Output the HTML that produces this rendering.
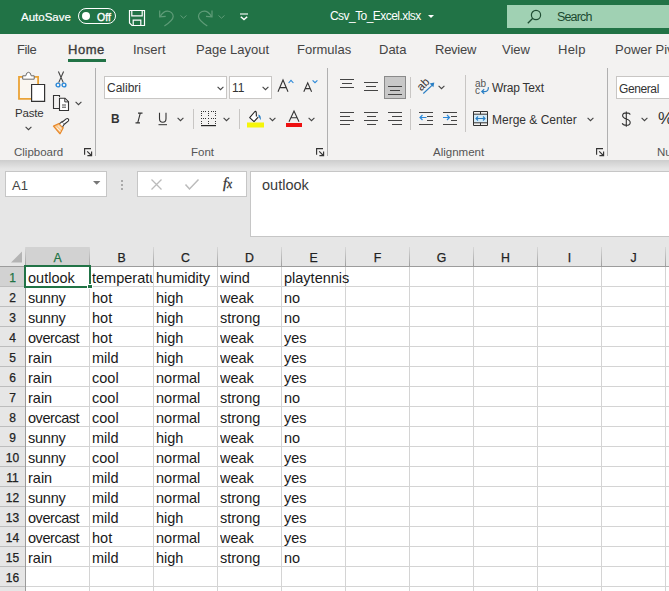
<!DOCTYPE html><html><head><meta charset="utf-8"><style>
*{box-sizing:border-box;margin:0;padding:0}
html,body{width:669px;height:591px;overflow:hidden;background:#fff;font-family:"Liberation Sans",sans-serif}
div,span{position:absolute;white-space:nowrap}
svg{position:absolute;overflow:visible}
.tab{font-size:13px;color:#444;line-height:16px;top:42px}
.gl{font-size:11.5px;color:#555;line-height:14px;top:145px}
.rt{font-size:12px;color:#333;line-height:14px}
.cell{font-size:14.5px;color:#1a1a1a;line-height:20px;height:20px;overflow:hidden}
.ch{font-size:12.3px;color:#222;-webkit-text-stroke-width:0.25px;text-align:center;line-height:19px;height:19px;top:248.5px}
.rh{font-size:12px;color:#222;-webkit-text-stroke-width:0.25px;text-align:center;line-height:20px;left:0;width:25px}
</style></head><body><div style="left:0;top:0;width:669px;height:34px;background:#217346"></div><div style="left:21px;top:10px;font-size:11.5px;line-height:14px;color:#fff;-webkit-text-stroke:0.2px #fff">AutoSave</div><div style="left:78px;top:8px;width:38px;height:16px;border:1.2px solid #fff;border-radius:8px"></div><div style="left:82px;top:12px;width:8px;height:8px;background:#fff;border-radius:50%"></div><div style="left:97px;top:10.5px;font-size:10.5px;line-height:12px;color:#fff;-webkit-text-stroke:0.35px #fff">Off</div><svg style="left:128px;top:9px" width="18" height="18" viewBox="0 0 18 18"><path d="M1.5 1.5H16.5V16.5H4L1.5 14Z" fill="none" stroke="#fff" stroke-width="1.2"/><path d="M3.8 1.5V6.8H14.2V1.5M5.2 16.5V11.2H12.8V16.5" fill="none" stroke="#fff" stroke-width="1.2"/></svg><svg style="left:157px;top:9px" width="18" height="18" viewBox="0 0 18 18"><path d="M2.7 1.6L2.7 7.9L8.7 7.4" fill="none" stroke="#5f9c78" stroke-width="1.2"/><path d="M3.2 7.3C5.5 3.8 7.8 2.1 10.3 2.1C13.6 2.1 16.2 4.4 16.2 7.5C16.2 10.6 12.3 13.8 7.4 16.9" fill="none" stroke="#5f9c78" stroke-width="1.2"/></svg><svg style="left:180px;top:15px" width="7" height="4" viewBox="0 0 7 4"><path d="M0.5 0.5l3 2.7 3-2.7" fill="none" stroke="#5f9c78" stroke-width="1"/></svg><svg style="left:197px;top:9px" width="18" height="18" viewBox="0 0 18 18"><g transform="translate(17.7 0) scale(-1 1)"><path d="M2.7 1.6L2.7 7.9L8.7 7.4" fill="none" stroke="#5f9c78" stroke-width="1.2"/><path d="M3.2 7.3C5.5 3.8 7.8 2.1 10.3 2.1C13.6 2.1 16.2 4.4 16.2 7.5C16.2 10.6 12.3 13.8 7.4 16.9" fill="none" stroke="#5f9c78" stroke-width="1.2"/></g></svg><svg style="left:218px;top:15px" width="7" height="4" viewBox="0 0 7 4"><path d="M0.5 0.5l3 2.7 3-2.7" fill="none" stroke="#5f9c78" stroke-width="1"/></svg><svg style="left:239px;top:13px" width="10" height="8" viewBox="0 0 10 8"><path d="M1 1h8" stroke="#fff" stroke-width="1.1"/><path d="M1.8 3.8l3.2 2.8 3.2-2.8" fill="none" stroke="#fff" stroke-width="1.5"/></svg><div style="left:330px;top:9px;font-size:12px;letter-spacing:-0.55px;line-height:14px;color:#fff">Csv_To_Excel.xlsx</div><svg style="left:428px;top:15px" width="6" height="4" viewBox="0 0 6 4"><path d="M0 0h6l-3 3z" fill="#fff"/></svg><div style="left:507px;top:5px;width:170px;height:23px;background:#a0d1b3"></div><svg style="left:526px;top:9px" width="16" height="16" viewBox="0 0 16 16"><circle cx="10" cy="6" r="4.6" fill="none" stroke="#1f4d33" stroke-width="1.2"/><path d="M6.8 9.3L1.8 14.3" stroke="#1f4d33" stroke-width="1.3"/></svg><div style="left:557px;top:10px;font-size:12.5px;letter-spacing:-0.85px;line-height:15px;color:#1b4a30">Search</div><div style="left:0;top:34px;width:669px;height:126px;background:#f3f2f1"></div><div class="tab" style="left:17px;letter-spacing:-0.4px;">File</div><div class="tab" style="left:68px;color:#3a3a3a;-webkit-text-stroke:0.35px #3a3a3a;letter-spacing:0.55px;">Home</div><div class="tab" style="left:133px;">Insert</div><div class="tab" style="left:196px;">Page Layout</div><div class="tab" style="left:297px;">Formulas</div><div class="tab" style="left:379px;">Data</div><div class="tab" style="left:435px;letter-spacing:-0.25px;">Review</div><div class="tab" style="left:502px;">View</div><div class="tab" style="left:558px;letter-spacing:0.25px;">Help</div><div class="tab" style="left:615px;">Power Pivot</div><div style="left:68px;top:59px;width:38px;height:3px;background:#217346"></div><div style="left:95px;top:68px;width:1px;height:88px;background:#b0b0b0"></div><div style="left:327px;top:68px;width:1px;height:88px;background:#b0b0b0"></div><div style="left:607px;top:68px;width:1px;height:88px;background:#b0b0b0"></div><div class="gl" style="left:14px">Clipboard</div><div class="gl" style="left:191px">Font</div><div class="gl" style="left:433px">Alignment</div><div class="gl" style="left:657px">Number</div><svg style="left:84px;top:148px" width="8" height="8" viewBox="0 0 8 8"><path d="M0.6 6.7V0.6H7M3.2 3.3L7.4 7.5M3.4 7.6H7.6V3.4" fill="none" stroke="#333" stroke-width="1.15"/></svg><svg style="left:316px;top:148px" width="8" height="8" viewBox="0 0 8 8"><path d="M0.6 6.7V0.6H7M3.2 3.3L7.4 7.5M3.4 7.6H7.6V3.4" fill="none" stroke="#333" stroke-width="1.15"/></svg><svg style="left:596px;top:148px" width="8" height="8" viewBox="0 0 8 8"><path d="M0.6 6.7V0.6H7M3.2 3.3L7.4 7.5M3.4 7.6H7.6V3.4" fill="none" stroke="#333" stroke-width="1.15"/></svg><svg style="left:17px;top:71px" width="30" height="32" viewBox="0 0 30 32"><path d="M2 5.8H21.1V27.9H2Z" fill="#faf6f0" stroke="#eba336" stroke-width="1.8"/><path d="M5.7 8.2V4.8H8.8Q9.2 1.3 11.5 1.3Q13.8 1.3 14.2 4.8H17.2V8.2Z" fill="#fff" stroke="#6a6a6a" stroke-width="1"/><path d="M14.6 13.5H27.6V30.3H14.6Z" fill="#fff" stroke="#333" stroke-width="1.2"/></svg><div class="rt" style="left:15px;top:106px;font-size:11.5px;letter-spacing:-0.2px">Paste</div><svg style="left:25px;top:126px" width="7" height="5" viewBox="0 0 7 5"><path d="M0.6 0.8l2.9 2.9 2.9-2.9" fill="none" stroke="#444" stroke-width="1.1"/></svg><svg style="left:55px;top:70px" width="12" height="18" viewBox="0 0 12 18"><path d="M3.4 1.5L8.3 12.6M8.6 1.5L3.7 12.6" stroke="#444" stroke-width="1.1"/><circle cx="3" cy="15" r="1.9" fill="none" stroke="#2b88d8" stroke-width="1.4"/><circle cx="9" cy="15" r="1.9" fill="none" stroke="#2b88d8" stroke-width="1.4"/></svg><svg style="left:52px;top:94px" width="18" height="18" viewBox="0 0 18 18"><path d="M7.5 3V1.5H1.5V14.5H7" fill="none" stroke="#333" stroke-width="1.1"/><path d="M7.5 4.2H13L16.5 7.7V16.5H7.5Z" fill="#fff" stroke="#333" stroke-width="1.1"/><path d="M12.8 4.2V7.9H16.5" fill="none" stroke="#333" stroke-width="1"/><path d="M10 11H14M10 13.2H14" stroke="#333" stroke-width="0.9"/></svg><svg style="left:75px;top:101px" width="7" height="5" viewBox="0 0 7 5"><path d="M0.6 0.8l2.9 2.9 2.9-2.9" fill="none" stroke="#444" stroke-width="1.1"/></svg><svg style="left:52px;top:118px" width="18" height="17" viewBox="0 0 18 17"><path d="M1.5 8.2L7 5.5L11.2 9.8L8 15.8Z" fill="#f9c98f" stroke="#e8892b" stroke-width="1.3" stroke-linejoin="round"/><path d="M4.5 9.5L8.5 13.3M6.2 7.8L9.5 11" stroke="#fff" stroke-width="0.8"/><path d="M7.6 5.6L10.2 3.6L12.5 5.9L10.6 8.7" fill="#fff" stroke="#333" stroke-width="1.1"/><path d="M10.4 4L14.2 0.9C15 0.3 15.9 0.5 16.4 1.1C16.9 1.7 16.8 2.5 16.2 3.1L12.3 6.2" fill="#fff" stroke="#333" stroke-width="1.1"/></svg><div style="left:104px;top:76px;width:123px;height:23px;background:#fff;border:1px solid #c8c6c4"></div><div class="rt" style="left:107px;top:81px">Calibri</div><svg style="left:217px;top:86px" width="7" height="5" viewBox="0 0 7 5"><path d="M0.6 0.8l2.9 2.9 2.9-2.9" fill="none" stroke="#444" stroke-width="1.1"/></svg><div style="left:229px;top:76px;width:43px;height:23px;background:#fff;border:1px solid #c8c6c4"></div><div class="rt" style="left:232px;top:81px">11</div><svg style="left:262px;top:86px" width="7" height="5" viewBox="0 0 7 5"><path d="M0.6 0.8l2.9 2.9 2.9-2.9" fill="none" stroke="#444" stroke-width="1.1"/></svg><svg style="left:277px;top:79px" width="18" height="14" viewBox="0 0 18 14"><path d="M1 12.8L6 1L11 12.8M2.8 8.6H9.2" fill="none" stroke="#333" stroke-width="1.1"/><path d="M11.6 4L14 1.4L16.4 4" fill="none" stroke="#2b88d8" stroke-width="1.1"/></svg><svg style="left:303px;top:79px" width="16" height="14" viewBox="0 0 16 14"><path d="M0.8 12.8L4.7 3.8L8.6 12.8M2.2 9.6H7.2" fill="none" stroke="#333" stroke-width="1.1"/><path d="M9.6 1.3L12 3.7L14.4 1.3" fill="none" stroke="#2b88d8" stroke-width="1.1"/></svg><div style="left:111px;top:111.5px;font-size:13px;font-weight:bold;line-height:14px;color:#333;transform:scaleX(0.92);transform-origin:left">B</div><svg style="left:135px;top:112px" width="8" height="12" viewBox="0 0 8 12"><path d="M3 1.1H7.5M0.5 10.9H5M5.3 1.1L2.7 10.9" fill="none" stroke="#333" stroke-width="1.1"/></svg><svg style="left:158px;top:112px" width="10" height="14" viewBox="0 0 10 14"><path d="M1.5 0.8V6.5C1.5 9 2.8 10.3 4.8 10.3C6.8 10.3 8 9 8 6.5V0.8" fill="none" stroke="#333" stroke-width="1.1"/><path d="M0.5 12.7H9" stroke="#333" stroke-width="1"/></svg><svg style="left:177px;top:117px" width="7" height="5" viewBox="0 0 7 5"><path d="M0.6 0.8l2.9 2.9 2.9-2.9" fill="none" stroke="#444" stroke-width="1.1"/></svg><div style="left:193px;top:109px;width:1px;height:20px;background:#c8c6c4"></div><svg style="left:201px;top:111px" width="16" height="16" viewBox="0 0 16 16"><g fill="#333"><rect x="0" y="0" width="1" height="1"/><rect x="0" y="2" width="1" height="1"/><rect x="0" y="4" width="1" height="1"/><rect x="0" y="7" width="1" height="1"/><rect x="0" y="10" width="1" height="1"/><rect x="0" y="12" width="1" height="1"/><rect x="2" y="0" width="1" height="1"/><rect x="2" y="7" width="1" height="1"/><rect x="4" y="0" width="1" height="1"/><rect x="4" y="7" width="1" height="1"/><rect x="7" y="0" width="1" height="1"/><rect x="7" y="2" width="1" height="1"/><rect x="7" y="4" width="1" height="1"/><rect x="7" y="7" width="1" height="1"/><rect x="7" y="10" width="1" height="1"/><rect x="7" y="12" width="1" height="1"/><rect x="10" y="0" width="1" height="1"/><rect x="10" y="7" width="1" height="1"/><rect x="12" y="0" width="1" height="1"/><rect x="12" y="7" width="1" height="1"/><rect x="14" y="0" width="1" height="1"/><rect x="14" y="2" width="1" height="1"/><rect x="14" y="4" width="1" height="1"/><rect x="14" y="7" width="1" height="1"/><rect x="14" y="10" width="1" height="1"/><rect x="14" y="12" width="1" height="1"/></g><rect x="0" y="14" width="15" height="1.2" fill="#222"/></svg><svg style="left:223px;top:117px" width="7" height="5" viewBox="0 0 7 5"><path d="M0.6 0.8l2.9 2.9 2.9-2.9" fill="none" stroke="#444" stroke-width="1.1"/></svg><div style="left:239px;top:109px;width:1px;height:20px;background:#c8c6c4"></div><svg style="left:247px;top:110px" width="17" height="18" viewBox="0 0 17 18"><path d="M9.4 6.6L9.2 2.2Q8.6 0.7 7.5 2L2.7 7.6L7 11.6L11.2 7.2" fill="#fff" stroke="#222" stroke-width="1.1" stroke-linejoin="round"/><path d="M11.6 4.6Q14.2 5.4 13.8 10.3Q12.6 8.2 11.4 6.2Z" fill="#2a7fc4"/><path d="M0 12.5h17v5H0z" fill="#f5f50a"/></svg><svg style="left:269px;top:117px" width="7" height="5" viewBox="0 0 7 5"><path d="M0.6 0.8l2.9 2.9 2.9-2.9" fill="none" stroke="#444" stroke-width="1.1"/></svg><svg style="left:288px;top:110px" width="12" height="13" viewBox="0 0 12 13"><path d="M1 11.8L6 1L11 11.8M2.9 7.8H9.1" fill="none" stroke="#333" stroke-width="1.1"/></svg><div style="left:286px;top:123px;width:16px;height:4px;background:#ee1111"></div><svg style="left:308px;top:117px" width="7" height="5" viewBox="0 0 7 5"><path d="M0.6 0.8l2.9 2.9 2.9-2.9" fill="none" stroke="#444" stroke-width="1.1"/></svg><div style="left:340px;top:78.7px;width:14px;height:1.5px;background:#444"></div><div style="left:342px;top:82.8px;width:10px;height:1.5px;background:#444"></div><div style="left:340px;top:86.8px;width:14px;height:1.5px;background:#444"></div><div style="left:364px;top:81.7px;width:14px;height:1.5px;background:#444"></div><div style="left:366px;top:85.8px;width:10px;height:1.5px;background:#444"></div><div style="left:364px;top:89.8px;width:14px;height:1.5px;background:#444"></div><div style="left:384px;top:76px;width:22px;height:23px;background:#c8c8c8;border:1px solid #8a8a8a"></div><div style="left:388px;top:85.7px;width:14px;height:1.5px;background:#444"></div><div style="left:390px;top:89.8px;width:10px;height:1.5px;background:#444"></div><div style="left:388px;top:93.8px;width:14px;height:1.5px;background:#444"></div><div style="left:410px;top:77px;width:1px;height:21px;background:#c8c6c4"></div><div style="left:417px;top:78.5px;font-size:11.5px;line-height:11px;color:#333;transform:rotate(-45deg)">ab</div><svg style="left:422px;top:82px" width="14" height="13" viewBox="0 0 14 13"><path d="M1.3 11.5L10 3.4" fill="none" stroke="#2a7fc4" stroke-width="1.2"/><path d="M7.6 1.6L12.3 0.6L11.4 5.3Z" fill="#2a7fc4"/></svg><svg style="left:438px;top:85px" width="7" height="5" viewBox="0 0 7 5"><path d="M0.6 0.8l2.9 2.9 2.9-2.9" fill="none" stroke="#444" stroke-width="1.1"/></svg><div style="left:340px;top:111.8px;width:14px;height:1.5px;background:#444"></div><div style="left:340px;top:115.8px;width:10px;height:1.5px;background:#444"></div><div style="left:340px;top:119.8px;width:14px;height:1.5px;background:#444"></div><div style="left:340px;top:123.8px;width:10px;height:1.5px;background:#444"></div><div style="left:364px;top:111.8px;width:14px;height:1.5px;background:#444"></div><div style="left:366.5px;top:115.8px;width:9.5px;height:1.5px;background:#444"></div><div style="left:364px;top:119.8px;width:14px;height:1.5px;background:#444"></div><div style="left:366.5px;top:123.8px;width:9.5px;height:1.5px;background:#444"></div><div style="left:388px;top:111.8px;width:14px;height:1.5px;background:#444"></div><div style="left:392px;top:115.8px;width:10px;height:1.5px;background:#444"></div><div style="left:388px;top:119.8px;width:14px;height:1.5px;background:#444"></div><div style="left:392px;top:123.8px;width:10px;height:1.5px;background:#444"></div><div style="left:410px;top:109px;width:1px;height:21px;background:#c8c6c4"></div><div style="left:419px;top:111.8px;width:14px;height:1.5px;background:#444"></div><div style="left:419px;top:123.8px;width:14px;height:1.5px;background:#444"></div><div style="left:427px;top:115.8px;width:6px;height:1.5px;background:#444"></div><div style="left:427px;top:119.8px;width:6px;height:1.5px;background:#444"></div><svg style="left:419px;top:114px" width="8" height="7" viewBox="0 0 8 7"><path d="M7.5 3.5H1M3.5 1L1 3.5 3.5 6" fill="none" stroke="#2b88d8" stroke-width="1.2"/></svg><div style="left:443px;top:111.8px;width:14px;height:1.5px;background:#444"></div><div style="left:443px;top:123.8px;width:14px;height:1.5px;background:#444"></div><div style="left:451px;top:115.8px;width:6px;height:1.5px;background:#444"></div><div style="left:451px;top:119.8px;width:6px;height:1.5px;background:#444"></div><svg style="left:443px;top:114px" width="8" height="7" viewBox="0 0 8 7"><path d="M0 3.5H6.5M4 1l2.5 2.5L4 6" fill="none" stroke="#2b88d8" stroke-width="1.2"/></svg><div style="left:465px;top:75px;width:1px;height:57px;background:#c8c6c4"></div><div style="left:475px;top:78.5px;font-size:10px;line-height:10px;color:#555">ab</div><div style="left:475px;top:86px;font-size:10px;line-height:10px;color:#555">c</div><svg style="left:480px;top:86px" width="10" height="9" viewBox="0 0 10 9"><path d="M8.3 1.2C8.6 3.5 7.5 5.6 5 5.6H2M4.2 3.3L1.8 5.6L4.2 7.9" fill="none" stroke="#2a7fc4" stroke-width="1.2"/></svg><div class="rt" style="left:492px;top:81px;letter-spacing:-0.2px">Wrap Text</div><svg style="left:473px;top:111px" width="15" height="15" viewBox="0 0 15 15"><rect x="1" y="3.5" width="13" height="8" fill="#d4ebf8"/><path d="M0.5 0.5H14.5V14.5H0.5Z" fill="none" stroke="#333" stroke-width="1"/><path d="M0.5 3.2H14.5M0.5 11.8H14.5M7.5 0.5V3.2M7.5 11.8V14.5" stroke="#333" stroke-width="1"/><path d="M3 7.5H12M5 5.5L3 7.5L5 9.5M10 5.5L12 7.5L10 9.5" fill="none" stroke="#2a7fc4" stroke-width="1.1"/></svg><div class="rt" style="left:492px;top:113px">Merge &amp; Center</div><svg style="left:587px;top:117px" width="7" height="5" viewBox="0 0 7 5"><path d="M0.6 0.8l2.9 2.9 2.9-2.9" fill="none" stroke="#444" stroke-width="1.1"/></svg><div style="left:616px;top:76px;width:80px;height:23px;background:#fff;border:1px solid #c8c6c4"></div><div class="rt" style="left:619px;top:82px;letter-spacing:-0.4px">General</div><svg style="left:621px;top:110px" width="11" height="18" viewBox="0 0 11 18"><path d="M5.3 1.5V16.7M9.2 4.6C8.8 3.4 7.4 2.9 5.3 2.9C3 2.9 1.6 4 1.6 5.8C1.6 7.7 3.2 8.3 5.3 9C7.6 9.7 9.2 10.4 9.2 12.4C9.2 14.3 7.6 15.3 5.3 15.3C3.2 15.3 1.7 14.6 1.2 13.2" fill="none" stroke="#333" stroke-width="1.1"/></svg><svg style="left:641px;top:117px" width="7" height="5" viewBox="0 0 7 5"><path d="M0.6 0.8l2.9 2.9 2.9-2.9" fill="none" stroke="#444" stroke-width="1.1"/></svg><div style="left:658px;top:110px;font-size:17px;line-height:18px;color:#333">%</div><div style="left:0;top:160px;width:669px;height:87px;background:#e6e6e6"></div><div style="left:0;top:160px;width:669px;height:9px;background:linear-gradient(#cdcdcd,#e6e6e6)"></div><div style="left:5px;top:171px;width:102px;height:26px;background:#fff;border:1px solid #c6c6c6"></div><div class="rt" style="left:12px;top:178px;font-size:13px;line-height:15px;color:#444">A1</div><svg style="left:93px;top:181px" width="8" height="4" viewBox="0 0 8 4"><path d="M0 0h7.4l-3.7 3.8z" fill="#777"/></svg><div style="left:121px;top:180px;width:2px;height:2px;background:#aaa"></div><div style="left:121px;top:184px;width:2px;height:2px;background:#aaa"></div><div style="left:121px;top:188px;width:2px;height:2px;background:#aaa"></div><div style="left:137px;top:171px;width:110px;height:26px;background:#fff;border:1px solid #c6c6c6"></div><svg style="left:151px;top:179px" width="11" height="11" viewBox="0 0 11 11"><path d="M0.5 0.5l10 10M10.5 0.5l-10 10" stroke="#bbb" stroke-width="1.3"/></svg><svg style="left:185px;top:179px" width="14" height="11" viewBox="0 0 14 11"><path d="M0.5 5.5l4 4.5 9-9.5" fill="none" stroke="#bbb" stroke-width="1.5"/></svg><div style="left:223px;top:176px;font-size:14.5px;font-family:'Liberation Serif';font-style:italic;line-height:15px;color:#333;-webkit-text-stroke:0.3px #333">f<span style="position:static;font-size:11.5px">x</span></div><div style="left:250px;top:171px;width:430px;height:66px;background:#fff;border:1px solid #c6c6c6"></div><div style="left:262px;top:175px;font-size:14.5px;line-height:20px;color:#3a3a3a">outlook</div><div style="left:0;top:247px;width:669px;height:344px;background:#fff"></div><div style="left:0;top:247px;width:669px;height:19px;background:#e6e6e6"></div><div style="left:0;top:267px;width:25px;height:324px;background:#e6e6e6"></div><div style="left:26px;top:247px;width:63px;height:19px;background:#d2d2d2"></div><div style="left:0;top:267px;width:25px;height:19px;background:#d2d2d2"></div><svg style="left:10px;top:251px" width="13" height="12" viewBox="0 0 13 12"><path d="M12 0.5V11.5H1z" fill="#b4b4b4"/></svg><div style="left:25px;top:247px;width:1px;height:19px;background:linear-gradient(#d8d8d8,#a0a0a0)"></div><div style="left:89px;top:267px;width:1px;height:324px;background:#d4d4d4"></div><div style="left:89px;top:247px;width:1px;height:19px;background:linear-gradient(#d8d8d8,#a0a0a0)"></div><div style="left:153px;top:267px;width:1px;height:324px;background:#d4d4d4"></div><div style="left:153px;top:247px;width:1px;height:19px;background:linear-gradient(#d8d8d8,#a0a0a0)"></div><div style="left:217px;top:267px;width:1px;height:324px;background:#d4d4d4"></div><div style="left:217px;top:247px;width:1px;height:19px;background:linear-gradient(#d8d8d8,#a0a0a0)"></div><div style="left:281px;top:267px;width:1px;height:324px;background:#d4d4d4"></div><div style="left:281px;top:247px;width:1px;height:19px;background:linear-gradient(#d8d8d8,#a0a0a0)"></div><div style="left:345px;top:267px;width:1px;height:324px;background:#d4d4d4"></div><div style="left:345px;top:247px;width:1px;height:19px;background:linear-gradient(#d8d8d8,#a0a0a0)"></div><div style="left:409px;top:267px;width:1px;height:324px;background:#d4d4d4"></div><div style="left:409px;top:247px;width:1px;height:19px;background:linear-gradient(#d8d8d8,#a0a0a0)"></div><div style="left:473px;top:267px;width:1px;height:324px;background:#d4d4d4"></div><div style="left:473px;top:247px;width:1px;height:19px;background:linear-gradient(#d8d8d8,#a0a0a0)"></div><div style="left:537px;top:267px;width:1px;height:324px;background:#d4d4d4"></div><div style="left:537px;top:247px;width:1px;height:19px;background:linear-gradient(#d8d8d8,#a0a0a0)"></div><div style="left:601px;top:267px;width:1px;height:324px;background:#d4d4d4"></div><div style="left:601px;top:247px;width:1px;height:19px;background:linear-gradient(#d8d8d8,#a0a0a0)"></div><div style="left:665px;top:267px;width:1px;height:324px;background:#d4d4d4"></div><div style="left:665px;top:247px;width:1px;height:19px;background:linear-gradient(#d8d8d8,#a0a0a0)"></div><div style="left:26px;top:286px;width:643px;height:1px;background:#d4d4d4"></div><div style="left:0;top:286px;width:25px;height:1px;background:#bdbdbd"></div><div style="left:26px;top:306px;width:643px;height:1px;background:#d4d4d4"></div><div style="left:0;top:306px;width:25px;height:1px;background:#bdbdbd"></div><div style="left:26px;top:326px;width:643px;height:1px;background:#d4d4d4"></div><div style="left:0;top:326px;width:25px;height:1px;background:#bdbdbd"></div><div style="left:26px;top:346px;width:643px;height:1px;background:#d4d4d4"></div><div style="left:0;top:346px;width:25px;height:1px;background:#bdbdbd"></div><div style="left:26px;top:366px;width:643px;height:1px;background:#d4d4d4"></div><div style="left:0;top:366px;width:25px;height:1px;background:#bdbdbd"></div><div style="left:26px;top:386px;width:643px;height:1px;background:#d4d4d4"></div><div style="left:0;top:386px;width:25px;height:1px;background:#bdbdbd"></div><div style="left:26px;top:406px;width:643px;height:1px;background:#d4d4d4"></div><div style="left:0;top:406px;width:25px;height:1px;background:#bdbdbd"></div><div style="left:26px;top:426px;width:643px;height:1px;background:#d4d4d4"></div><div style="left:0;top:426px;width:25px;height:1px;background:#bdbdbd"></div><div style="left:26px;top:446px;width:643px;height:1px;background:#d4d4d4"></div><div style="left:0;top:446px;width:25px;height:1px;background:#bdbdbd"></div><div style="left:26px;top:466px;width:643px;height:1px;background:#d4d4d4"></div><div style="left:0;top:466px;width:25px;height:1px;background:#bdbdbd"></div><div style="left:26px;top:486px;width:643px;height:1px;background:#d4d4d4"></div><div style="left:0;top:486px;width:25px;height:1px;background:#bdbdbd"></div><div style="left:26px;top:506px;width:643px;height:1px;background:#d4d4d4"></div><div style="left:0;top:506px;width:25px;height:1px;background:#bdbdbd"></div><div style="left:26px;top:526px;width:643px;height:1px;background:#d4d4d4"></div><div style="left:0;top:526px;width:25px;height:1px;background:#bdbdbd"></div><div style="left:26px;top:546px;width:643px;height:1px;background:#d4d4d4"></div><div style="left:0;top:546px;width:25px;height:1px;background:#bdbdbd"></div><div style="left:26px;top:566px;width:643px;height:1px;background:#d4d4d4"></div><div style="left:0;top:566px;width:25px;height:1px;background:#bdbdbd"></div><div style="left:26px;top:586px;width:643px;height:1px;background:#d4d4d4"></div><div style="left:0;top:586px;width:25px;height:1px;background:#bdbdbd"></div><div style="left:0;top:266px;width:669px;height:1px;background:#9c9c9c"></div><div style="left:25px;top:266px;width:1px;height:325px;background:#9c9c9c"></div><div class="ch" style="left:26px;width:63px;color:#217346;">A</div><div class="ch" style="left:90px;width:63px;">B</div><div class="ch" style="left:154px;width:63px;">C</div><div class="ch" style="left:218px;width:63px;">D</div><div class="ch" style="left:282px;width:63px;">E</div><div class="ch" style="left:346px;width:63px;">F</div><div class="ch" style="left:410px;width:63px;">G</div><div class="ch" style="left:474px;width:63px;">H</div><div class="ch" style="left:538px;width:63px;">I</div><div class="ch" style="left:602px;width:63px;">J</div><div class="rh" style="top:268px;color:#217346;">1</div><div class="rh" style="top:288px;">2</div><div class="rh" style="top:308px;">3</div><div class="rh" style="top:328px;">4</div><div class="rh" style="top:348px;">5</div><div class="rh" style="top:368px;">6</div><div class="rh" style="top:388px;">7</div><div class="rh" style="top:408px;">8</div><div class="rh" style="top:428px;">9</div><div class="rh" style="top:448px;">10</div><div class="rh" style="top:468px;">11</div><div class="rh" style="top:488px;">12</div><div class="rh" style="top:508px;">13</div><div class="rh" style="top:528px;">14</div><div class="rh" style="top:548px;">15</div><div class="rh" style="top:568px;">16</div><div class="rh" style="top:588px;">17</div><div class="cell" style="left:28px;top:267.6px;width:61px;letter-spacing:0px">outlook</div><div class="cell" style="left:92px;top:267.6px;width:61px;letter-spacing:0px">temperature</div><div class="cell" style="left:156px;top:267.6px;width:61px;letter-spacing:0px">humidity</div><div class="cell" style="left:220px;top:267.6px;width:61px;letter-spacing:0px">wind</div><div class="cell" style="left:284px;top:267.6px;width:120px;letter-spacing:0px">playtennis</div><div class="cell" style="left:28px;top:287.6px;width:61px;letter-spacing:-0.25px">sunny</div><div class="cell" style="left:92px;top:287.6px;width:61px;letter-spacing:0px">hot</div><div class="cell" style="left:156px;top:287.6px;width:61px;letter-spacing:0px">high</div><div class="cell" style="left:220px;top:287.6px;width:61px;letter-spacing:0px">weak</div><div class="cell" style="left:284px;top:287.6px;width:120px;letter-spacing:0px">no</div><div class="cell" style="left:28px;top:307.6px;width:61px;letter-spacing:-0.25px">sunny</div><div class="cell" style="left:92px;top:307.6px;width:61px;letter-spacing:0px">hot</div><div class="cell" style="left:156px;top:307.6px;width:61px;letter-spacing:0px">high</div><div class="cell" style="left:220px;top:307.6px;width:61px;letter-spacing:0px">strong</div><div class="cell" style="left:284px;top:307.6px;width:120px;letter-spacing:0px">no</div><div class="cell" style="left:28px;top:327.6px;width:61px;letter-spacing:-0.45px">overcast</div><div class="cell" style="left:92px;top:327.6px;width:61px;letter-spacing:0px">hot</div><div class="cell" style="left:156px;top:327.6px;width:61px;letter-spacing:0px">high</div><div class="cell" style="left:220px;top:327.6px;width:61px;letter-spacing:0px">weak</div><div class="cell" style="left:284px;top:327.6px;width:120px;letter-spacing:0px">yes</div><div class="cell" style="left:28px;top:347.6px;width:61px;letter-spacing:0px">rain</div><div class="cell" style="left:92px;top:347.6px;width:61px;letter-spacing:0px">mild</div><div class="cell" style="left:156px;top:347.6px;width:61px;letter-spacing:0px">high</div><div class="cell" style="left:220px;top:347.6px;width:61px;letter-spacing:0px">weak</div><div class="cell" style="left:284px;top:347.6px;width:120px;letter-spacing:0px">yes</div><div class="cell" style="left:28px;top:367.6px;width:61px;letter-spacing:0px">rain</div><div class="cell" style="left:92px;top:367.6px;width:61px;letter-spacing:0px">cool</div><div class="cell" style="left:156px;top:367.6px;width:61px;letter-spacing:0px">normal</div><div class="cell" style="left:220px;top:367.6px;width:61px;letter-spacing:0px">weak</div><div class="cell" style="left:284px;top:367.6px;width:120px;letter-spacing:0px">yes</div><div class="cell" style="left:28px;top:387.6px;width:61px;letter-spacing:0px">rain</div><div class="cell" style="left:92px;top:387.6px;width:61px;letter-spacing:0px">cool</div><div class="cell" style="left:156px;top:387.6px;width:61px;letter-spacing:0px">normal</div><div class="cell" style="left:220px;top:387.6px;width:61px;letter-spacing:0px">strong</div><div class="cell" style="left:284px;top:387.6px;width:120px;letter-spacing:0px">no</div><div class="cell" style="left:28px;top:407.6px;width:61px;letter-spacing:-0.45px">overcast</div><div class="cell" style="left:92px;top:407.6px;width:61px;letter-spacing:0px">cool</div><div class="cell" style="left:156px;top:407.6px;width:61px;letter-spacing:0px">normal</div><div class="cell" style="left:220px;top:407.6px;width:61px;letter-spacing:0px">strong</div><div class="cell" style="left:284px;top:407.6px;width:120px;letter-spacing:0px">yes</div><div class="cell" style="left:28px;top:427.6px;width:61px;letter-spacing:-0.25px">sunny</div><div class="cell" style="left:92px;top:427.6px;width:61px;letter-spacing:0px">mild</div><div class="cell" style="left:156px;top:427.6px;width:61px;letter-spacing:0px">high</div><div class="cell" style="left:220px;top:427.6px;width:61px;letter-spacing:0px">weak</div><div class="cell" style="left:284px;top:427.6px;width:120px;letter-spacing:0px">no</div><div class="cell" style="left:28px;top:447.6px;width:61px;letter-spacing:-0.25px">sunny</div><div class="cell" style="left:92px;top:447.6px;width:61px;letter-spacing:0px">cool</div><div class="cell" style="left:156px;top:447.6px;width:61px;letter-spacing:0px">normal</div><div class="cell" style="left:220px;top:447.6px;width:61px;letter-spacing:0px">weak</div><div class="cell" style="left:284px;top:447.6px;width:120px;letter-spacing:0px">yes</div><div class="cell" style="left:28px;top:467.6px;width:61px;letter-spacing:0px">rain</div><div class="cell" style="left:92px;top:467.6px;width:61px;letter-spacing:0px">mild</div><div class="cell" style="left:156px;top:467.6px;width:61px;letter-spacing:0px">normal</div><div class="cell" style="left:220px;top:467.6px;width:61px;letter-spacing:0px">weak</div><div class="cell" style="left:284px;top:467.6px;width:120px;letter-spacing:0px">yes</div><div class="cell" style="left:28px;top:487.6px;width:61px;letter-spacing:-0.25px">sunny</div><div class="cell" style="left:92px;top:487.6px;width:61px;letter-spacing:0px">mild</div><div class="cell" style="left:156px;top:487.6px;width:61px;letter-spacing:0px">normal</div><div class="cell" style="left:220px;top:487.6px;width:61px;letter-spacing:0px">strong</div><div class="cell" style="left:284px;top:487.6px;width:120px;letter-spacing:0px">yes</div><div class="cell" style="left:28px;top:507.6px;width:61px;letter-spacing:-0.45px">overcast</div><div class="cell" style="left:92px;top:507.6px;width:61px;letter-spacing:0px">mild</div><div class="cell" style="left:156px;top:507.6px;width:61px;letter-spacing:0px">high</div><div class="cell" style="left:220px;top:507.6px;width:61px;letter-spacing:0px">strong</div><div class="cell" style="left:284px;top:507.6px;width:120px;letter-spacing:0px">yes</div><div class="cell" style="left:28px;top:527.6px;width:61px;letter-spacing:-0.45px">overcast</div><div class="cell" style="left:92px;top:527.6px;width:61px;letter-spacing:0px">hot</div><div class="cell" style="left:156px;top:527.6px;width:61px;letter-spacing:0px">normal</div><div class="cell" style="left:220px;top:527.6px;width:61px;letter-spacing:0px">weak</div><div class="cell" style="left:284px;top:527.6px;width:120px;letter-spacing:0px">yes</div><div class="cell" style="left:28px;top:547.6px;width:61px;letter-spacing:0px">rain</div><div class="cell" style="left:92px;top:547.6px;width:61px;letter-spacing:0px">mild</div><div class="cell" style="left:156px;top:547.6px;width:61px;letter-spacing:0px">high</div><div class="cell" style="left:220px;top:547.6px;width:61px;letter-spacing:0px">strong</div><div class="cell" style="left:284px;top:547.6px;width:120px;letter-spacing:0px">no</div><div style="left:24px;top:265px;width:67px;height:23px;border:2px solid #217346"></div><div style="left:87px;top:284px;width:6px;height:5px;background:#217346;border:1px solid #fff"></div></body></html>
